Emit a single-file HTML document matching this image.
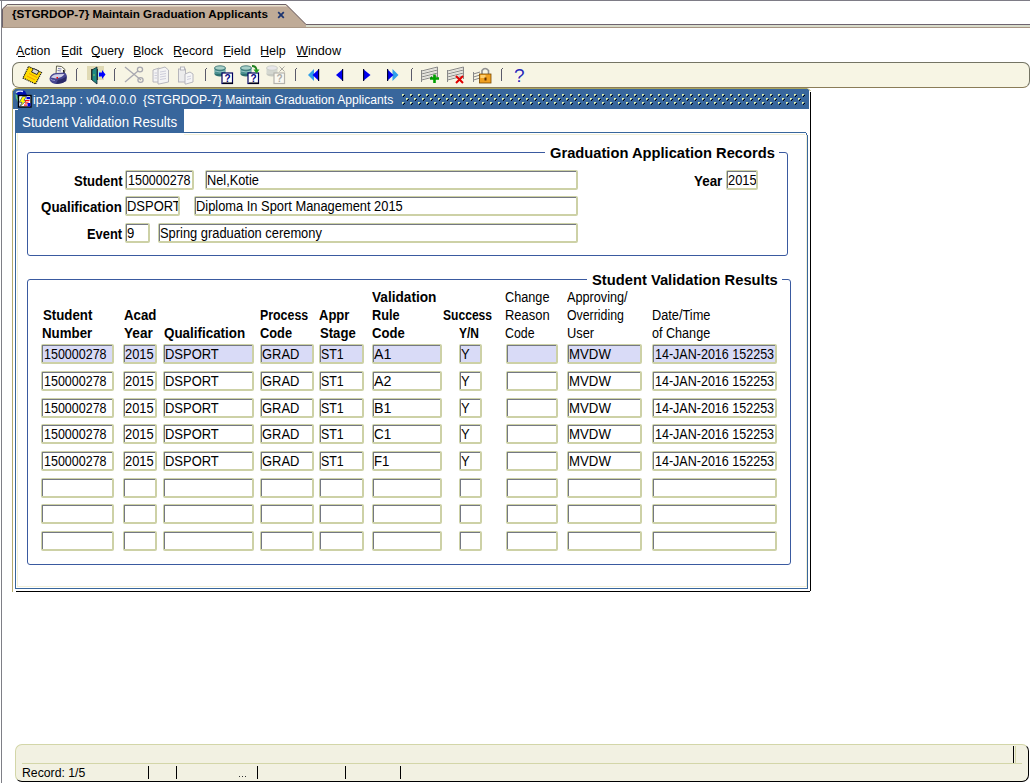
<!DOCTYPE html><html><head><meta charset="utf-8"><style>
html,body{margin:0;padding:0;background:#fff;width:1030px;height:783px;overflow:hidden;position:relative;}
div,span,svg{position:absolute;box-sizing:content-box;}
.t{font-family:"Liberation Sans",sans-serif;white-space:nowrap;transform-origin:0 0;}
.fo{background:#cdd1a6;border-radius:2px;}
.fi{left:1px;top:1px;height:16px;border-top:1px solid #747882;border-left:1px solid #747882;overflow:hidden;}
</style></head><body>
<div style="left:0px;top:0px;width:1030px;height:1px;background:#7e7c86"></div>
<div style="left:1px;top:0px;width:1px;height:783px;background:#7e7f86"></div>
<div style="left:2px;top:24px;width:1028px;height:1px;background:#6e6470"></div>
<div style="left:2px;top:25px;width:1028px;height:2px;background:#d9dccb"></div>
<div style="left:2px;top:27px;width:1028px;height:1px;background:#a99785"></div>
<svg style="position:absolute;left:0;top:0" width="320" height="30">
<path d="M2 27 L2 9 L7 4 L286 4 L306 24 L306 27 Z" fill="#bfab97"/>
<path d="M2.5 27 L2.5 9 L7.5 4.5 L286 4.5 L306 24.5 L320 24.5" fill="none" stroke="#6d6168" stroke-width="1"/>
<path d="M7 5.5 L286 5.5" stroke="#e6e4cc" stroke-width="1"/>
<path d="M6 6.5 L287 6.5" stroke="#d8c4b8" stroke-width="1"/>
</svg>
<span class="t" style="left:12.00px;top:9px;font-size:11.5px;line-height:11.5px;color:#000;font-weight:bold;transform:scaleX(1.0158);">{STGRDOP-7} Maintain Graduation Applicants</span>
<svg style="position:absolute;left:276px;top:10px" width="10" height="9"><path d="M2.2 2.2 L7.8 7.8 M7.8 2.2 L2.2 7.8" stroke="#1a3470" stroke-width="1.7"/></svg>
<span class="t" style="left:16.30px;top:45px;font-size:12px;line-height:12px;color:#000;transform:scaleX(1.0303);">Action</span>
<div style="left:18px;top:56px;width:7px;height:1px;background:#000"></div>
<span class="t" style="left:60.50px;top:45px;font-size:12px;line-height:12px;color:#000;transform:scaleX(1.0286);">Edit</span>
<div style="left:62px;top:56px;width:7px;height:1px;background:#000"></div>
<span class="t" style="left:90.70px;top:45px;font-size:12px;line-height:12px;color:#000;transform:scaleX(1.0091);">Query</span>
<div style="left:92px;top:56px;width:8px;height:1px;background:#000"></div>
<span class="t" style="left:132.70px;top:45px;font-size:12px;line-height:12px;color:#000;transform:scaleX(1.0267);">Block</span>
<div style="left:134px;top:56px;width:7px;height:1px;background:#000"></div>
<span class="t" style="left:172.70px;top:45px;font-size:12px;line-height:12px;color:#000;transform:scaleX(1.0359);">Record</span>
<div style="left:174px;top:56px;width:8px;height:1px;background:#000"></div>
<span class="t" style="left:222.50px;top:45px;font-size:12px;line-height:12px;color:#000;transform:scaleX(1.0692);">Field</span>
<div style="left:224px;top:56px;width:7px;height:1px;background:#000"></div>
<span class="t" style="left:259.80px;top:45px;font-size:12px;line-height:12px;color:#000;transform:scaleX(1.0480);">Help</span>
<div style="left:261px;top:56px;width:8px;height:1px;background:#000"></div>
<span class="t" style="left:295.70px;top:45px;font-size:12px;line-height:12px;color:#000;transform:scaleX(1.0558);">Window</span>
<div style="left:297px;top:56px;width:11px;height:1px;background:#000"></div>
<div style="left:12px;top:62px;width:1016px;height:24px;background:#f7f5e4;border:1px solid #747464;border-bottom-color:#8a7c58;border-radius:7px;"></div>
<svg style="position:absolute;left:0;top:0" width="540" height="90">
<!-- floppy -->
<g>
<polygon points="28.5,66.5 41.5,72.5 35.5,84 23,78" fill="#ffdc00" stroke="#1a1a1a" stroke-width="1.2" stroke-dasharray="1.2 0.8"/>
<path d="M27 76 L35 80 M29 73.5 L37 77.5 M31 71 L38.5 74.5" stroke="#f08000" stroke-width="0.9" opacity="0.8"/>
<polygon points="33.5,68.5 39,71 37,74.5 31.5,72" fill="#d8d8d8" stroke="#222" stroke-width="0.9"/>
</g>
<!-- printer -->
<g>
<polygon points="56.5,66 61.5,66.5 65,69.5 64,75 56,74" fill="#fafaf0" stroke="#505040" stroke-width="0.9"/>
<path d="M58 68.5 L61.5 69 M57.5 70.5 L61 71" stroke="#7070b0" stroke-width="0.9"/>
<path d="M63.5 70 L64 74.5" stroke="#202020" stroke-width="1.2"/>
<path d="M49.5 78.5 Q50.5 73.5 56 73 L64.5 72.5 Q67.5 74.5 66.8 78 L66.3 81 Q61 84.8 54.5 83.8 Q49.5 82.3 49.5 78.5 Z" fill="#464690"/>
<path d="M58 80 Q63 79 66.5 76.5 L66 81 Q61 84.8 56 83.5 Z" fill="#2a2a68"/>
<path d="M51 77.5 Q52.5 74.5 57 74.2 L64.5 74 Q62.5 77.5 56 78.5 Z" fill="#d0d0e8"/>
<path d="M50.5 79 Q52 80.5 55 80.5" stroke="#9090c8" stroke-width="1" fill="none"/>
<rect x="56.5" y="77" width="1.5" height="1.5" fill="#ff0000"/>
</g>
<!-- separators -->
<g fill="#5a5a6a">
<rect x="76" y="69" width="1" height="12"/><rect x="77" y="68" width="1" height="1"/>
<rect x="114" y="69" width="1" height="12"/><rect x="115" y="68" width="1" height="1"/>
<rect x="205" y="69" width="1" height="12"/><rect x="206" y="68" width="1" height="1"/>
<rect x="295" y="69" width="1" height="12"/><rect x="296" y="68" width="1" height="1"/>
<rect x="411" y="69" width="1" height="12"/><rect x="412" y="68" width="1" height="1"/>
<rect x="501" y="69" width="1" height="12"/><rect x="502" y="68" width="1" height="1"/>
</g>
<!-- exit door -->
<g>
<rect x="87" y="66" width="17" height="14" fill="#e0dab4"/>
<rect x="91" y="69" width="2" height="11" fill="#40382a"/>
<polygon points="92,70 97,67 97,84 92,80" fill="#1f8a82" stroke="#123" stroke-width="0.8"/>
<rect x="97" y="69" width="1" height="11" fill="#2a2a3a"/>
<rect x="98" y="71" width="2" height="6" fill="#a8f0f0"/>
<polygon points="99,72.5 102,72.5 102,70 105.5,74.5 102,79 102,76.5 99,76.5" fill="#0000ff"/>
<rect x="93.5" y="74.5" width="1" height="1" fill="#ffff40"/>
</g>
<!-- scissors (disabled) -->
<g fill="none" stroke="#a8a8b0" stroke-width="1.3">
<path d="M125 67 L141 80"/><path d="M125 82 L138 71"/>
<ellipse cx="140" cy="69.5" rx="2.6" ry="2.4"/><ellipse cx="140.5" cy="80" rx="2.6" ry="2.4"/>
</g>
<!-- copy (disabled) -->
<g stroke="#b0b0b8" stroke-width="0.9" fill="#f4f4f4">
<polygon points="153,70 159,68 162,70 162,82 153,82"/>
<polygon points="158,69 165,67 168.5,70 168.5,82 159,84 158,84"/>
<path d="M160 72 L166 71 M160 74.5 L166 73.5 M160 77 L166 76 M160 79.5 L166 78.5 M154.5 73 L157 73 M154.5 75.5 L157 75.5 M154.5 78 L157 78" stroke="#c8c8d8"/>
</g>
<!-- paste (disabled) -->
<g stroke="#b0b0b8" stroke-width="0.9" fill="#ececec">
<rect x="178.5" y="69" width="7" height="13" />
<rect x="180.5" y="67" width="4" height="3" fill="#f8f8f8"/>
<polygon points="185,74 190,72 193,74 193,82 186,84 185,84" fill="#f6f6f6"/>
<path d="M187 77 L191 76 M187 79.5 L191 78.5" stroke="#c8c8d8"/>
</g>
<!-- query db icons -->
<g>
<ellipse cx="220" cy="74" rx="5.5" ry="2.5" fill="#2e7070"/>
<rect x="214.5" y="68" width="11" height="6" fill="#4a9090"/>
<ellipse cx="220" cy="68" rx="5.5" ry="2.2" fill="#a8d0c8" stroke="#2e6a6a" stroke-width="0.8"/>
<path d="M215 71 Q220 73 225 71" stroke="#a8d0d0" fill="none" stroke-width="0.8"/>
<rect x="222" y="73" width="10.5" height="10.5" fill="#fff" stroke="#000060" stroke-width="1.2"/>
<rect x="223" y="82.5" width="10" height="1.2" fill="#000"/>
<text x="224.5" y="82" font-family="Liberation Sans" font-weight="bold" font-size="10" fill="#000080">?</text>
</g>
<g>
<ellipse cx="246" cy="74" rx="5.5" ry="2.5" fill="#2e7070"/>
<rect x="240.5" y="68" width="11" height="6" fill="#4a9090"/>
<ellipse cx="246" cy="68" rx="5.5" ry="2.2" fill="#a8d0c8" stroke="#2e6a6a" stroke-width="0.8"/>
<path d="M241 71 Q246 73 251 71" stroke="#a8d0d0" fill="none" stroke-width="0.8"/>
<rect x="248" y="73" width="10.5" height="10.5" fill="#fff" stroke="#000060" stroke-width="1.2"/>
<rect x="249" y="82.5" width="10" height="1.2" fill="#000"/>
<text x="250.5" y="82" font-family="Liberation Sans" font-weight="bold" font-size="10" fill="#000080">?</text>
<path d="M252 66 Q256 66 256.5 70" stroke="#208020" stroke-width="1.8" fill="none"/>
<polygon points="253.5,69.5 259.5,69.5 256.5,73.5" fill="#20a020"/>
</g>
<g opacity="0.55">
<ellipse cx="272" cy="74" rx="5.5" ry="2.5" fill="#a0a8a8"/>
<rect x="266.5" y="68" width="11" height="6" fill="#b8c0c0"/>
<ellipse cx="272" cy="68" rx="5.5" ry="2.2" fill="#dde" stroke="#a0a8a8" stroke-width="0.8"/>
<rect x="274" y="73" width="10.5" height="10.5" fill="#fff" stroke="#808080" stroke-width="1.2"/>
<text x="276.5" y="82" font-family="Liberation Sans" font-weight="bold" font-size="10" fill="#707070">?</text>
<path d="M279.5 66.5 L284.5 71.5 M284.5 66.5 L279.5 71.5" stroke="#707070" stroke-width="1"/>
</g>
<!-- nav arrows -->
<g>
<polygon points="314,69 308,75 314,81" fill="#30a0e8"/>
<polygon points="319,69 312.5,75 319,81" fill="#0000f0"/>
<rect x="318" y="69" width="1.2" height="12" fill="#000030"/>
<polygon points="343,69 336,75 343,81" fill="#0000f0"/>
<rect x="342" y="69" width="1.2" height="12" fill="#000030"/>
<polygon points="363,69 370.5,75 363,81" fill="#0000f0"/>
<rect x="363" y="69" width="1.2" height="12" fill="#000030"/>
<polygon points="392.5,69 398.5,75 392.5,81" fill="#30a0e8"/>
<polygon points="387,69 393.5,75 387,81" fill="#0000f0"/>
<rect x="387" y="69" width="1.2" height="12" fill="#000030"/>
</g>
<!-- record insert/delete/lock -->
<g stroke="#888" stroke-width="1" fill="none">
<path d="M421.5 71 L437.5 67 M421.5 74 L437.5 70 M421.5 77 L437.5 73 M421.5 80 L437.5 76"/>
<path d="M421.5 70 L421.5 82 M437.5 67 L437.5 79"/>
<path d="M447.5 71 L463.5 67 M447.5 74 L463.5 70 M447.5 77 L463.5 73 M447.5 80 L463.5 76"/>
<path d="M447.5 70 L447.5 82 M463.5 67 L463.5 79"/>
<path d="M473.5 74 L480 72 M473.5 77 L480 75 M473.5 80 L480 78 M473.5 72 L473.5 82"/>
</g>
<g stroke="#d8d8d8" stroke-width="1" fill="none">
<path d="M422 72.5 L437 68.5 M422 75.5 L437 71.5 M422 78.5 L437 74.5"/>
<path d="M448 72.5 L463 68.5 M448 75.5 L463 71.5 M448 78.5 L463 74.5"/>
</g>
<path d="M430 78.5 L439 78.5 M434.5 74.5 L434.5 83" stroke="#00a000" stroke-width="2.6"/>
<path d="M431 77 L432 77" stroke="#005000" stroke-width="1"/>
<path d="M456 76 L463 83 M463 76 L456 83" stroke="#e00000" stroke-width="2"/>
<g>
<path d="M482 75 L482 70.5 Q485 66.5 488.5 70.5 L488.5 75" stroke="#909090" stroke-width="1.6" fill="none"/>
<rect x="479.5" y="74" width="11.5" height="9" fill="#f0a020" stroke="#7a4a00" stroke-width="0.8"/>
<rect x="480.5" y="75" width="5" height="3" fill="#ffd070"/>
<rect x="484.5" y="77.5" width="2" height="3" fill="#603000"/>
</g>
<!-- help -->
<text x="513" y="82" font-family="Liberation Sans" font-size="19" fill="#ffffff">?</text>
<text x="514" y="81.5" font-family="Liberation Sans" font-size="19" fill="#2a2ab8">?</text>
</svg>

<div style="left:12px;top:88px;width:796px;height:1px;background:#a8a460"></div>
<div style="left:12px;top:88px;width:1px;height:504px;background:#b3aa70"></div>
<div style="left:13px;top:89px;width:796px;height:20px;background:#38669c"></div>
<svg style="position:absolute;left:402px;top:94px" width="410" height="12"><path d="M0 0h2v1h-1v1h-1z" fill="#e4f0a8"/><path d="M2 1h1v1h-1zM1 2h1v1h-1z" fill="#000"/><path d="M8 0h2v1h-1v1h-1z" fill="#e4f0a8"/><path d="M10 1h1v1h-1zM9 2h1v1h-1z" fill="#000"/><path d="M16 0h2v1h-1v1h-1z" fill="#e4f0a8"/><path d="M18 1h1v1h-1zM17 2h1v1h-1z" fill="#000"/><path d="M24 0h2v1h-1v1h-1z" fill="#e4f0a8"/><path d="M26 1h1v1h-1zM25 2h1v1h-1z" fill="#000"/><path d="M32 0h2v1h-1v1h-1z" fill="#e4f0a8"/><path d="M34 1h1v1h-1zM33 2h1v1h-1z" fill="#000"/><path d="M40 0h2v1h-1v1h-1z" fill="#e4f0a8"/><path d="M42 1h1v1h-1zM41 2h1v1h-1z" fill="#000"/><path d="M48 0h2v1h-1v1h-1z" fill="#e4f0a8"/><path d="M50 1h1v1h-1zM49 2h1v1h-1z" fill="#000"/><path d="M56 0h2v1h-1v1h-1z" fill="#e4f0a8"/><path d="M58 1h1v1h-1zM57 2h1v1h-1z" fill="#000"/><path d="M64 0h2v1h-1v1h-1z" fill="#e4f0a8"/><path d="M66 1h1v1h-1zM65 2h1v1h-1z" fill="#000"/><path d="M72 0h2v1h-1v1h-1z" fill="#e4f0a8"/><path d="M74 1h1v1h-1zM73 2h1v1h-1z" fill="#000"/><path d="M80 0h2v1h-1v1h-1z" fill="#e4f0a8"/><path d="M82 1h1v1h-1zM81 2h1v1h-1z" fill="#000"/><path d="M88 0h2v1h-1v1h-1z" fill="#e4f0a8"/><path d="M90 1h1v1h-1zM89 2h1v1h-1z" fill="#000"/><path d="M96 0h2v1h-1v1h-1z" fill="#e4f0a8"/><path d="M98 1h1v1h-1zM97 2h1v1h-1z" fill="#000"/><path d="M104 0h2v1h-1v1h-1z" fill="#e4f0a8"/><path d="M106 1h1v1h-1zM105 2h1v1h-1z" fill="#000"/><path d="M112 0h2v1h-1v1h-1z" fill="#e4f0a8"/><path d="M114 1h1v1h-1zM113 2h1v1h-1z" fill="#000"/><path d="M120 0h2v1h-1v1h-1z" fill="#e4f0a8"/><path d="M122 1h1v1h-1zM121 2h1v1h-1z" fill="#000"/><path d="M128 0h2v1h-1v1h-1z" fill="#e4f0a8"/><path d="M130 1h1v1h-1zM129 2h1v1h-1z" fill="#000"/><path d="M136 0h2v1h-1v1h-1z" fill="#e4f0a8"/><path d="M138 1h1v1h-1zM137 2h1v1h-1z" fill="#000"/><path d="M144 0h2v1h-1v1h-1z" fill="#e4f0a8"/><path d="M146 1h1v1h-1zM145 2h1v1h-1z" fill="#000"/><path d="M152 0h2v1h-1v1h-1z" fill="#e4f0a8"/><path d="M154 1h1v1h-1zM153 2h1v1h-1z" fill="#000"/><path d="M160 0h2v1h-1v1h-1z" fill="#e4f0a8"/><path d="M162 1h1v1h-1zM161 2h1v1h-1z" fill="#000"/><path d="M168 0h2v1h-1v1h-1z" fill="#e4f0a8"/><path d="M170 1h1v1h-1zM169 2h1v1h-1z" fill="#000"/><path d="M176 0h2v1h-1v1h-1z" fill="#e4f0a8"/><path d="M178 1h1v1h-1zM177 2h1v1h-1z" fill="#000"/><path d="M184 0h2v1h-1v1h-1z" fill="#e4f0a8"/><path d="M186 1h1v1h-1zM185 2h1v1h-1z" fill="#000"/><path d="M192 0h2v1h-1v1h-1z" fill="#e4f0a8"/><path d="M194 1h1v1h-1zM193 2h1v1h-1z" fill="#000"/><path d="M200 0h2v1h-1v1h-1z" fill="#e4f0a8"/><path d="M202 1h1v1h-1zM201 2h1v1h-1z" fill="#000"/><path d="M208 0h2v1h-1v1h-1z" fill="#e4f0a8"/><path d="M210 1h1v1h-1zM209 2h1v1h-1z" fill="#000"/><path d="M216 0h2v1h-1v1h-1z" fill="#e4f0a8"/><path d="M218 1h1v1h-1zM217 2h1v1h-1z" fill="#000"/><path d="M224 0h2v1h-1v1h-1z" fill="#e4f0a8"/><path d="M226 1h1v1h-1zM225 2h1v1h-1z" fill="#000"/><path d="M232 0h2v1h-1v1h-1z" fill="#e4f0a8"/><path d="M234 1h1v1h-1zM233 2h1v1h-1z" fill="#000"/><path d="M240 0h2v1h-1v1h-1z" fill="#e4f0a8"/><path d="M242 1h1v1h-1zM241 2h1v1h-1z" fill="#000"/><path d="M248 0h2v1h-1v1h-1z" fill="#e4f0a8"/><path d="M250 1h1v1h-1zM249 2h1v1h-1z" fill="#000"/><path d="M256 0h2v1h-1v1h-1z" fill="#e4f0a8"/><path d="M258 1h1v1h-1zM257 2h1v1h-1z" fill="#000"/><path d="M264 0h2v1h-1v1h-1z" fill="#e4f0a8"/><path d="M266 1h1v1h-1zM265 2h1v1h-1z" fill="#000"/><path d="M272 0h2v1h-1v1h-1z" fill="#e4f0a8"/><path d="M274 1h1v1h-1zM273 2h1v1h-1z" fill="#000"/><path d="M280 0h2v1h-1v1h-1z" fill="#e4f0a8"/><path d="M282 1h1v1h-1zM281 2h1v1h-1z" fill="#000"/><path d="M288 0h2v1h-1v1h-1z" fill="#e4f0a8"/><path d="M290 1h1v1h-1zM289 2h1v1h-1z" fill="#000"/><path d="M296 0h2v1h-1v1h-1z" fill="#e4f0a8"/><path d="M298 1h1v1h-1zM297 2h1v1h-1z" fill="#000"/><path d="M304 0h2v1h-1v1h-1z" fill="#e4f0a8"/><path d="M306 1h1v1h-1zM305 2h1v1h-1z" fill="#000"/><path d="M312 0h2v1h-1v1h-1z" fill="#e4f0a8"/><path d="M314 1h1v1h-1zM313 2h1v1h-1z" fill="#000"/><path d="M320 0h2v1h-1v1h-1z" fill="#e4f0a8"/><path d="M322 1h1v1h-1zM321 2h1v1h-1z" fill="#000"/><path d="M328 0h2v1h-1v1h-1z" fill="#e4f0a8"/><path d="M330 1h1v1h-1zM329 2h1v1h-1z" fill="#000"/><path d="M336 0h2v1h-1v1h-1z" fill="#e4f0a8"/><path d="M338 1h1v1h-1zM337 2h1v1h-1z" fill="#000"/><path d="M344 0h2v1h-1v1h-1z" fill="#e4f0a8"/><path d="M346 1h1v1h-1zM345 2h1v1h-1z" fill="#000"/><path d="M352 0h2v1h-1v1h-1z" fill="#e4f0a8"/><path d="M354 1h1v1h-1zM353 2h1v1h-1z" fill="#000"/><path d="M360 0h2v1h-1v1h-1z" fill="#e4f0a8"/><path d="M362 1h1v1h-1zM361 2h1v1h-1z" fill="#000"/><path d="M368 0h2v1h-1v1h-1z" fill="#e4f0a8"/><path d="M370 1h1v1h-1zM369 2h1v1h-1z" fill="#000"/><path d="M376 0h2v1h-1v1h-1z" fill="#e4f0a8"/><path d="M378 1h1v1h-1zM377 2h1v1h-1z" fill="#000"/><path d="M384 0h2v1h-1v1h-1z" fill="#e4f0a8"/><path d="M386 1h1v1h-1zM385 2h1v1h-1z" fill="#000"/><path d="M392 0h2v1h-1v1h-1z" fill="#e4f0a8"/><path d="M394 1h1v1h-1zM393 2h1v1h-1z" fill="#000"/><path d="M400 0h2v1h-1v1h-1z" fill="#e4f0a8"/><path d="M402 1h1v1h-1zM401 2h1v1h-1z" fill="#000"/><path d="M4 4h2v1h-1v1h-1z" fill="#e4f0a8"/><path d="M6 5h1v1h-1zM5 6h1v1h-1z" fill="#000"/><path d="M12 4h2v1h-1v1h-1z" fill="#e4f0a8"/><path d="M14 5h1v1h-1zM13 6h1v1h-1z" fill="#000"/><path d="M20 4h2v1h-1v1h-1z" fill="#e4f0a8"/><path d="M22 5h1v1h-1zM21 6h1v1h-1z" fill="#000"/><path d="M28 4h2v1h-1v1h-1z" fill="#e4f0a8"/><path d="M30 5h1v1h-1zM29 6h1v1h-1z" fill="#000"/><path d="M36 4h2v1h-1v1h-1z" fill="#e4f0a8"/><path d="M38 5h1v1h-1zM37 6h1v1h-1z" fill="#000"/><path d="M44 4h2v1h-1v1h-1z" fill="#e4f0a8"/><path d="M46 5h1v1h-1zM45 6h1v1h-1z" fill="#000"/><path d="M52 4h2v1h-1v1h-1z" fill="#e4f0a8"/><path d="M54 5h1v1h-1zM53 6h1v1h-1z" fill="#000"/><path d="M60 4h2v1h-1v1h-1z" fill="#e4f0a8"/><path d="M62 5h1v1h-1zM61 6h1v1h-1z" fill="#000"/><path d="M68 4h2v1h-1v1h-1z" fill="#e4f0a8"/><path d="M70 5h1v1h-1zM69 6h1v1h-1z" fill="#000"/><path d="M76 4h2v1h-1v1h-1z" fill="#e4f0a8"/><path d="M78 5h1v1h-1zM77 6h1v1h-1z" fill="#000"/><path d="M84 4h2v1h-1v1h-1z" fill="#e4f0a8"/><path d="M86 5h1v1h-1zM85 6h1v1h-1z" fill="#000"/><path d="M92 4h2v1h-1v1h-1z" fill="#e4f0a8"/><path d="M94 5h1v1h-1zM93 6h1v1h-1z" fill="#000"/><path d="M100 4h2v1h-1v1h-1z" fill="#e4f0a8"/><path d="M102 5h1v1h-1zM101 6h1v1h-1z" fill="#000"/><path d="M108 4h2v1h-1v1h-1z" fill="#e4f0a8"/><path d="M110 5h1v1h-1zM109 6h1v1h-1z" fill="#000"/><path d="M116 4h2v1h-1v1h-1z" fill="#e4f0a8"/><path d="M118 5h1v1h-1zM117 6h1v1h-1z" fill="#000"/><path d="M124 4h2v1h-1v1h-1z" fill="#e4f0a8"/><path d="M126 5h1v1h-1zM125 6h1v1h-1z" fill="#000"/><path d="M132 4h2v1h-1v1h-1z" fill="#e4f0a8"/><path d="M134 5h1v1h-1zM133 6h1v1h-1z" fill="#000"/><path d="M140 4h2v1h-1v1h-1z" fill="#e4f0a8"/><path d="M142 5h1v1h-1zM141 6h1v1h-1z" fill="#000"/><path d="M148 4h2v1h-1v1h-1z" fill="#e4f0a8"/><path d="M150 5h1v1h-1zM149 6h1v1h-1z" fill="#000"/><path d="M156 4h2v1h-1v1h-1z" fill="#e4f0a8"/><path d="M158 5h1v1h-1zM157 6h1v1h-1z" fill="#000"/><path d="M164 4h2v1h-1v1h-1z" fill="#e4f0a8"/><path d="M166 5h1v1h-1zM165 6h1v1h-1z" fill="#000"/><path d="M172 4h2v1h-1v1h-1z" fill="#e4f0a8"/><path d="M174 5h1v1h-1zM173 6h1v1h-1z" fill="#000"/><path d="M180 4h2v1h-1v1h-1z" fill="#e4f0a8"/><path d="M182 5h1v1h-1zM181 6h1v1h-1z" fill="#000"/><path d="M188 4h2v1h-1v1h-1z" fill="#e4f0a8"/><path d="M190 5h1v1h-1zM189 6h1v1h-1z" fill="#000"/><path d="M196 4h2v1h-1v1h-1z" fill="#e4f0a8"/><path d="M198 5h1v1h-1zM197 6h1v1h-1z" fill="#000"/><path d="M204 4h2v1h-1v1h-1z" fill="#e4f0a8"/><path d="M206 5h1v1h-1zM205 6h1v1h-1z" fill="#000"/><path d="M212 4h2v1h-1v1h-1z" fill="#e4f0a8"/><path d="M214 5h1v1h-1zM213 6h1v1h-1z" fill="#000"/><path d="M220 4h2v1h-1v1h-1z" fill="#e4f0a8"/><path d="M222 5h1v1h-1zM221 6h1v1h-1z" fill="#000"/><path d="M228 4h2v1h-1v1h-1z" fill="#e4f0a8"/><path d="M230 5h1v1h-1zM229 6h1v1h-1z" fill="#000"/><path d="M236 4h2v1h-1v1h-1z" fill="#e4f0a8"/><path d="M238 5h1v1h-1zM237 6h1v1h-1z" fill="#000"/><path d="M244 4h2v1h-1v1h-1z" fill="#e4f0a8"/><path d="M246 5h1v1h-1zM245 6h1v1h-1z" fill="#000"/><path d="M252 4h2v1h-1v1h-1z" fill="#e4f0a8"/><path d="M254 5h1v1h-1zM253 6h1v1h-1z" fill="#000"/><path d="M260 4h2v1h-1v1h-1z" fill="#e4f0a8"/><path d="M262 5h1v1h-1zM261 6h1v1h-1z" fill="#000"/><path d="M268 4h2v1h-1v1h-1z" fill="#e4f0a8"/><path d="M270 5h1v1h-1zM269 6h1v1h-1z" fill="#000"/><path d="M276 4h2v1h-1v1h-1z" fill="#e4f0a8"/><path d="M278 5h1v1h-1zM277 6h1v1h-1z" fill="#000"/><path d="M284 4h2v1h-1v1h-1z" fill="#e4f0a8"/><path d="M286 5h1v1h-1zM285 6h1v1h-1z" fill="#000"/><path d="M292 4h2v1h-1v1h-1z" fill="#e4f0a8"/><path d="M294 5h1v1h-1zM293 6h1v1h-1z" fill="#000"/><path d="M300 4h2v1h-1v1h-1z" fill="#e4f0a8"/><path d="M302 5h1v1h-1zM301 6h1v1h-1z" fill="#000"/><path d="M308 4h2v1h-1v1h-1z" fill="#e4f0a8"/><path d="M310 5h1v1h-1zM309 6h1v1h-1z" fill="#000"/><path d="M316 4h2v1h-1v1h-1z" fill="#e4f0a8"/><path d="M318 5h1v1h-1zM317 6h1v1h-1z" fill="#000"/><path d="M324 4h2v1h-1v1h-1z" fill="#e4f0a8"/><path d="M326 5h1v1h-1zM325 6h1v1h-1z" fill="#000"/><path d="M332 4h2v1h-1v1h-1z" fill="#e4f0a8"/><path d="M334 5h1v1h-1zM333 6h1v1h-1z" fill="#000"/><path d="M340 4h2v1h-1v1h-1z" fill="#e4f0a8"/><path d="M342 5h1v1h-1zM341 6h1v1h-1z" fill="#000"/><path d="M348 4h2v1h-1v1h-1z" fill="#e4f0a8"/><path d="M350 5h1v1h-1zM349 6h1v1h-1z" fill="#000"/><path d="M356 4h2v1h-1v1h-1z" fill="#e4f0a8"/><path d="M358 5h1v1h-1zM357 6h1v1h-1z" fill="#000"/><path d="M364 4h2v1h-1v1h-1z" fill="#e4f0a8"/><path d="M366 5h1v1h-1zM365 6h1v1h-1z" fill="#000"/><path d="M372 4h2v1h-1v1h-1z" fill="#e4f0a8"/><path d="M374 5h1v1h-1zM373 6h1v1h-1z" fill="#000"/><path d="M380 4h2v1h-1v1h-1z" fill="#e4f0a8"/><path d="M382 5h1v1h-1zM381 6h1v1h-1z" fill="#000"/><path d="M388 4h2v1h-1v1h-1z" fill="#e4f0a8"/><path d="M390 5h1v1h-1zM389 6h1v1h-1z" fill="#000"/><path d="M396 4h2v1h-1v1h-1z" fill="#e4f0a8"/><path d="M398 5h1v1h-1zM397 6h1v1h-1z" fill="#000"/><path d="M0 8h2v1h-1v1h-1z" fill="#e4f0a8"/><path d="M2 9h1v1h-1zM1 10h1v1h-1z" fill="#000"/><path d="M8 8h2v1h-1v1h-1z" fill="#e4f0a8"/><path d="M10 9h1v1h-1zM9 10h1v1h-1z" fill="#000"/><path d="M16 8h2v1h-1v1h-1z" fill="#e4f0a8"/><path d="M18 9h1v1h-1zM17 10h1v1h-1z" fill="#000"/><path d="M24 8h2v1h-1v1h-1z" fill="#e4f0a8"/><path d="M26 9h1v1h-1zM25 10h1v1h-1z" fill="#000"/><path d="M32 8h2v1h-1v1h-1z" fill="#e4f0a8"/><path d="M34 9h1v1h-1zM33 10h1v1h-1z" fill="#000"/><path d="M40 8h2v1h-1v1h-1z" fill="#e4f0a8"/><path d="M42 9h1v1h-1zM41 10h1v1h-1z" fill="#000"/><path d="M48 8h2v1h-1v1h-1z" fill="#e4f0a8"/><path d="M50 9h1v1h-1zM49 10h1v1h-1z" fill="#000"/><path d="M56 8h2v1h-1v1h-1z" fill="#e4f0a8"/><path d="M58 9h1v1h-1zM57 10h1v1h-1z" fill="#000"/><path d="M64 8h2v1h-1v1h-1z" fill="#e4f0a8"/><path d="M66 9h1v1h-1zM65 10h1v1h-1z" fill="#000"/><path d="M72 8h2v1h-1v1h-1z" fill="#e4f0a8"/><path d="M74 9h1v1h-1zM73 10h1v1h-1z" fill="#000"/><path d="M80 8h2v1h-1v1h-1z" fill="#e4f0a8"/><path d="M82 9h1v1h-1zM81 10h1v1h-1z" fill="#000"/><path d="M88 8h2v1h-1v1h-1z" fill="#e4f0a8"/><path d="M90 9h1v1h-1zM89 10h1v1h-1z" fill="#000"/><path d="M96 8h2v1h-1v1h-1z" fill="#e4f0a8"/><path d="M98 9h1v1h-1zM97 10h1v1h-1z" fill="#000"/><path d="M104 8h2v1h-1v1h-1z" fill="#e4f0a8"/><path d="M106 9h1v1h-1zM105 10h1v1h-1z" fill="#000"/><path d="M112 8h2v1h-1v1h-1z" fill="#e4f0a8"/><path d="M114 9h1v1h-1zM113 10h1v1h-1z" fill="#000"/><path d="M120 8h2v1h-1v1h-1z" fill="#e4f0a8"/><path d="M122 9h1v1h-1zM121 10h1v1h-1z" fill="#000"/><path d="M128 8h2v1h-1v1h-1z" fill="#e4f0a8"/><path d="M130 9h1v1h-1zM129 10h1v1h-1z" fill="#000"/><path d="M136 8h2v1h-1v1h-1z" fill="#e4f0a8"/><path d="M138 9h1v1h-1zM137 10h1v1h-1z" fill="#000"/><path d="M144 8h2v1h-1v1h-1z" fill="#e4f0a8"/><path d="M146 9h1v1h-1zM145 10h1v1h-1z" fill="#000"/><path d="M152 8h2v1h-1v1h-1z" fill="#e4f0a8"/><path d="M154 9h1v1h-1zM153 10h1v1h-1z" fill="#000"/><path d="M160 8h2v1h-1v1h-1z" fill="#e4f0a8"/><path d="M162 9h1v1h-1zM161 10h1v1h-1z" fill="#000"/><path d="M168 8h2v1h-1v1h-1z" fill="#e4f0a8"/><path d="M170 9h1v1h-1zM169 10h1v1h-1z" fill="#000"/><path d="M176 8h2v1h-1v1h-1z" fill="#e4f0a8"/><path d="M178 9h1v1h-1zM177 10h1v1h-1z" fill="#000"/><path d="M184 8h2v1h-1v1h-1z" fill="#e4f0a8"/><path d="M186 9h1v1h-1zM185 10h1v1h-1z" fill="#000"/><path d="M192 8h2v1h-1v1h-1z" fill="#e4f0a8"/><path d="M194 9h1v1h-1zM193 10h1v1h-1z" fill="#000"/><path d="M200 8h2v1h-1v1h-1z" fill="#e4f0a8"/><path d="M202 9h1v1h-1zM201 10h1v1h-1z" fill="#000"/><path d="M208 8h2v1h-1v1h-1z" fill="#e4f0a8"/><path d="M210 9h1v1h-1zM209 10h1v1h-1z" fill="#000"/><path d="M216 8h2v1h-1v1h-1z" fill="#e4f0a8"/><path d="M218 9h1v1h-1zM217 10h1v1h-1z" fill="#000"/><path d="M224 8h2v1h-1v1h-1z" fill="#e4f0a8"/><path d="M226 9h1v1h-1zM225 10h1v1h-1z" fill="#000"/><path d="M232 8h2v1h-1v1h-1z" fill="#e4f0a8"/><path d="M234 9h1v1h-1zM233 10h1v1h-1z" fill="#000"/><path d="M240 8h2v1h-1v1h-1z" fill="#e4f0a8"/><path d="M242 9h1v1h-1zM241 10h1v1h-1z" fill="#000"/><path d="M248 8h2v1h-1v1h-1z" fill="#e4f0a8"/><path d="M250 9h1v1h-1zM249 10h1v1h-1z" fill="#000"/><path d="M256 8h2v1h-1v1h-1z" fill="#e4f0a8"/><path d="M258 9h1v1h-1zM257 10h1v1h-1z" fill="#000"/><path d="M264 8h2v1h-1v1h-1z" fill="#e4f0a8"/><path d="M266 9h1v1h-1zM265 10h1v1h-1z" fill="#000"/><path d="M272 8h2v1h-1v1h-1z" fill="#e4f0a8"/><path d="M274 9h1v1h-1zM273 10h1v1h-1z" fill="#000"/><path d="M280 8h2v1h-1v1h-1z" fill="#e4f0a8"/><path d="M282 9h1v1h-1zM281 10h1v1h-1z" fill="#000"/><path d="M288 8h2v1h-1v1h-1z" fill="#e4f0a8"/><path d="M290 9h1v1h-1zM289 10h1v1h-1z" fill="#000"/><path d="M296 8h2v1h-1v1h-1z" fill="#e4f0a8"/><path d="M298 9h1v1h-1zM297 10h1v1h-1z" fill="#000"/><path d="M304 8h2v1h-1v1h-1z" fill="#e4f0a8"/><path d="M306 9h1v1h-1zM305 10h1v1h-1z" fill="#000"/><path d="M312 8h2v1h-1v1h-1z" fill="#e4f0a8"/><path d="M314 9h1v1h-1zM313 10h1v1h-1z" fill="#000"/><path d="M320 8h2v1h-1v1h-1z" fill="#e4f0a8"/><path d="M322 9h1v1h-1zM321 10h1v1h-1z" fill="#000"/><path d="M328 8h2v1h-1v1h-1z" fill="#e4f0a8"/><path d="M330 9h1v1h-1zM329 10h1v1h-1z" fill="#000"/><path d="M336 8h2v1h-1v1h-1z" fill="#e4f0a8"/><path d="M338 9h1v1h-1zM337 10h1v1h-1z" fill="#000"/><path d="M344 8h2v1h-1v1h-1z" fill="#e4f0a8"/><path d="M346 9h1v1h-1zM345 10h1v1h-1z" fill="#000"/><path d="M352 8h2v1h-1v1h-1z" fill="#e4f0a8"/><path d="M354 9h1v1h-1zM353 10h1v1h-1z" fill="#000"/><path d="M360 8h2v1h-1v1h-1z" fill="#e4f0a8"/><path d="M362 9h1v1h-1zM361 10h1v1h-1z" fill="#000"/><path d="M368 8h2v1h-1v1h-1z" fill="#e4f0a8"/><path d="M370 9h1v1h-1zM369 10h1v1h-1z" fill="#000"/><path d="M376 8h2v1h-1v1h-1z" fill="#e4f0a8"/><path d="M378 9h1v1h-1zM377 10h1v1h-1z" fill="#000"/><path d="M384 8h2v1h-1v1h-1z" fill="#e4f0a8"/><path d="M386 9h1v1h-1zM385 10h1v1h-1z" fill="#000"/><path d="M392 8h2v1h-1v1h-1z" fill="#e4f0a8"/><path d="M394 9h1v1h-1zM393 10h1v1h-1z" fill="#000"/><path d="M400 8h2v1h-1v1h-1z" fill="#e4f0a8"/><path d="M402 9h1v1h-1zM401 10h1v1h-1z" fill="#000"/></svg>
<svg style="position:absolute;left:11px;top:87px" width="6" height="6"><polygon points="0,0 4,0 4,1 1,4 0,4" fill="#fff"/><path d="M1.5 4.5 L4.5 1.5" stroke="#a8a460" stroke-width="1"/></svg>
<svg style="position:absolute;left:804px;top:87px" width="8" height="8"><polygon points="3,1 8,1 8,6" fill="#fff"/><path d="M4 1.5 L6.5 4" stroke="#a8a460" stroke-width="1"/></svg>
<svg style="position:absolute;left:12px;top:88px" width="24" height="20">
<path d="M5 4 Q9 1 13 3 L15 7 L8 8 L7 14 Q3 11 4 7 Z" fill="#0010b0"/>
<path d="M4 4.5 Q7 2.5 11 3.5" stroke="#e0e4ff" stroke-width="1.3" fill="none"/>
<path d="M4.5 6.5 Q4 10 6.5 13" stroke="#60c880" stroke-width="2" fill="none"/>
<rect x="6.5" y="7.5" width="12.5" height="11.5" fill="#fff" stroke="#000" stroke-width="1.4"/>
<polygon points="10.5,8.5 14.5,8.5 12,12.3 14.8,12.3 7.5,19 10,14.3 7.3,14.3" fill="#ffff00" stroke="#001080" stroke-width="0.6"/>
<rect x="14.5" y="9" width="3.5" height="2.2" fill="#0000d8"/>
<rect x="13" y="12" width="4.5" height="1.3" fill="#ff1010"/>
<rect x="13" y="14.3" width="3.5" height="1.3" fill="#ff1010"/>
<rect x="12" y="16.5" width="3" height="1.2" fill="#ff1010"/>
<rect x="15.5" y="15" width="3" height="3.5" fill="#0000d8"/>
</svg>

<span class="t" style="left:32.70px;top:94px;font-size:12px;line-height:12px;color:#fff;transform:scaleX(1.0112);white-space:pre;">ip21app : v04.0.0.0  {STGRDOP-7} Maintain Graduation Applicants</span>
<div style="left:13px;top:109px;width:2px;height:480px;background:#fff"></div>
<div style="left:15px;top:109px;width:169px;height:24px;background:#38669c"></div>
<div style="left:15px;top:109px;width:3px;height:1px;background:#fff"></div>
<span class="t" style="left:21.70px;top:115px;font-size:14px;line-height:14px;color:#fff;transform:scaleX(0.9509);">Student Validation Results</span>
<div style="left:184px;top:132px;width:622px;height:1px;background:#38669c"></div>
<div style="left:15px;top:133px;width:1px;height:456px;background:#38669c"></div>
<div style="left:15px;top:588px;width:793px;height:1px;background:#38669c"></div>
<div style="left:807px;top:135px;width:1px;height:453px;background:#38669c"></div>
<div style="left:806px;top:133px;width:1px;height:2px;background:#38669c"></div>
<div style="left:16px;top:591px;width:794px;height:1px;background:#000"></div>
<div style="left:810px;top:92px;width:1px;height:499px;background:#000"></div>
<div style="left:17px;top:133px;width:1px;height:454px;background:#f2f0d8"></div>
<div style="left:17px;top:586px;width:789px;height:1px;background:#f2f0d8"></div>
<div style="left:806px;top:135px;width:1px;height:452px;background:#f2f0d8"></div>
<div style="left:184px;top:134px;width:621px;height:1px;background:#f2f0d8"></div>
<div style="left:27px;top:152px;width:759px;height:102px;border:1px solid #3a5aa0;border-radius:3px;"></div>
<div style="left:545px;top:148px;width:234px;height:8px;background:#fff"></div>
<span class="t" style="left:550.30px;top:145px;font-size:15px;line-height:15px;color:#000;font-weight:bold;transform:scaleX(0.9799);">Graduation Application Records</span>
<span class="t" style="left:74.10px;top:174px;font-size:14px;line-height:14px;color:#000;font-weight:bold;transform:scaleX(0.9327);">Student</span>
<span class="t" style="left:41.10px;top:200px;font-size:14px;line-height:14px;color:#000;font-weight:bold;transform:scaleX(0.9529);">Qualification</span>
<span class="t" style="left:87.30px;top:227px;font-size:14px;line-height:14px;color:#000;font-weight:bold;transform:scaleX(0.9211);">Event</span>
<span class="t" style="left:694.00px;top:174px;font-size:14px;line-height:14px;color:#000;font-weight:bold;transform:scaleX(0.9567);">Year</span>
<div class="fo" style="left:125px;top:170px;width:69px;height:20px;"><div class="fi" style="width:65px;background:#fff"><span class="t" style="left:1.20px;top:1px;font-size:14px;line-height:14px;transform:scaleX(0.8929);">150000278</span></div></div>
<div class="fo" style="left:205px;top:170px;width:373px;height:20px;"><div class="fi" style="width:369px;background:#fff"><span class="t" style="left:0.20px;top:1px;font-size:14px;line-height:14px;transform:scaleX(0.9123);">Nel,Kotie</span></div></div>
<div class="fo" style="left:125px;top:196px;width:55px;height:20px;"><div class="fi" style="width:51px;background:#fff"><span class="t" style="left:0.20px;top:1px;font-size:14px;line-height:14px;transform:scaleX(0.9254);">DSPORT</span></div></div>
<div class="fo" style="left:194px;top:196px;width:384px;height:20px;"><div class="fi" style="width:380px;background:#fff"><span class="t" style="left:0.20px;top:1px;font-size:14px;line-height:14px;transform:scaleX(0.9191);">Diploma In Sport Management 2015</span></div></div>
<div class="fo" style="left:125px;top:223px;width:25px;height:20px;"><div class="fi" style="width:21px;background:#fff"><span class="t" style="left:0.20px;top:1px;font-size:14px;line-height:14px;transform:scaleX(0.9375);">9</span></div></div>
<div class="fo" style="left:158px;top:223px;width:420px;height:20px;"><div class="fi" style="width:416px;background:#fff"><span class="t" style="left:0.20px;top:1px;font-size:14px;line-height:14px;transform:scaleX(0.9205);">Spring graduation ceremony</span></div></div>
<div class="fo" style="left:726px;top:170px;width:32px;height:20px;"><div class="fi" style="width:28px;background:#fff"><span class="t" style="left:0.20px;top:1px;font-size:14px;line-height:14px;transform:scaleX(0.9194);">2015</span></div></div>
<div style="left:27px;top:279px;width:762px;height:284px;border:1px solid #3a5aa0;border-radius:3px;"></div>
<div style="left:587px;top:274px;width:195px;height:8px;background:#fff"></div>
<span class="t" style="left:592.10px;top:272px;font-size:15px;line-height:15px;color:#000;font-weight:bold;transform:scaleX(0.9820);">Student Validation Results</span>
<span class="t" style="left:42.80px;top:308px;font-size:14px;line-height:14px;color:#000;font-weight:bold;transform:scaleX(0.9462);">Student</span>
<span class="t" style="left:42.10px;top:326px;font-size:14px;line-height:14px;color:#000;font-weight:bold;transform:scaleX(0.9491);">Number</span>
<span class="t" style="left:123.60px;top:308px;font-size:14px;line-height:14px;color:#000;font-weight:bold;transform:scaleX(0.9471);">Acad</span>
<span class="t" style="left:124.00px;top:326px;font-size:14px;line-height:14px;color:#000;font-weight:bold;transform:scaleX(0.9733);">Year</span>
<span class="t" style="left:163.50px;top:326px;font-size:14px;line-height:14px;color:#000;font-weight:bold;transform:scaleX(0.9576);">Qualification</span>
<span class="t" style="left:260.20px;top:308px;font-size:14px;line-height:14px;color:#000;font-weight:bold;transform:scaleX(0.8836);">Process</span>
<span class="t" style="left:260.20px;top:326px;font-size:14px;line-height:14px;color:#000;font-weight:bold;transform:scaleX(0.9143);">Code</span>
<span class="t" style="left:318.80px;top:308px;font-size:14px;line-height:14px;color:#000;font-weight:bold;transform:scaleX(0.9303);">Appr</span>
<span class="t" style="left:319.80px;top:326px;font-size:14px;line-height:14px;color:#000;font-weight:bold;transform:scaleX(0.9368);">Stage</span>
<span class="t" style="left:372.20px;top:290px;font-size:14px;line-height:14px;color:#000;font-weight:bold;transform:scaleX(0.9742);">Validation</span>
<span class="t" style="left:372.20px;top:308px;font-size:14px;line-height:14px;color:#000;font-weight:bold;transform:scaleX(0.9097);">Rule</span>
<span class="t" style="left:372.20px;top:326px;font-size:14px;line-height:14px;color:#000;font-weight:bold;transform:scaleX(0.9343);">Code</span>
<span class="t" style="left:443.00px;top:308px;font-size:14px;line-height:14px;color:#000;font-weight:bold;transform:scaleX(0.8632);">Success</span>
<span class="t" style="left:458.50px;top:326px;font-size:14px;line-height:14px;color:#000;font-weight:bold;transform:scaleX(0.8565);">Y/N</span>
<span class="t" style="left:504.70px;top:290px;font-size:14px;line-height:14px;color:#000;transform:scaleX(0.9061);">Change</span>
<span class="t" style="left:504.70px;top:308px;font-size:14px;line-height:14px;color:#000;transform:scaleX(0.9250);">Reason</span>
<span class="t" style="left:504.70px;top:326px;font-size:14px;line-height:14px;color:#000;transform:scaleX(0.8824);">Code</span>
<span class="t" style="left:566.60px;top:290px;font-size:14px;line-height:14px;color:#000;transform:scaleX(0.9060);">Approving/</span>
<span class="t" style="left:567.20px;top:308px;font-size:14px;line-height:14px;color:#000;transform:scaleX(0.8800);">Overriding</span>
<span class="t" style="left:567.00px;top:326px;font-size:14px;line-height:14px;color:#000;transform:scaleX(0.9167);">User</span>
<span class="t" style="left:652.00px;top:308px;font-size:14px;line-height:14px;color:#000;transform:scaleX(0.9109);">Date/Time</span>
<span class="t" style="left:652.00px;top:326px;font-size:14px;line-height:14px;color:#000;transform:scaleX(0.9000);">of Change</span>
<div class="fo" style="left:41px;top:344px;width:73px;height:20px;"><div class="fi" style="width:69px;background:#d9dbf7"><span class="t" style="left:1.20px;top:1px;font-size:14px;line-height:14px;transform:scaleX(0.8929);">150000278</span></div></div>
<div class="fo" style="left:123px;top:344px;width:34px;height:20px;"><div class="fi" style="width:30px;background:#d9dbf7"><span class="t" style="left:0.20px;top:1px;font-size:14px;line-height:14px;transform:scaleX(0.9194);">2015</span></div></div>
<div class="fo" style="left:163px;top:344px;width:91px;height:20px;"><div class="fi" style="width:87px;background:#d9dbf7"><span class="t" style="left:0.20px;top:1px;font-size:14px;line-height:14px;transform:scaleX(0.9254);">DSPORT</span></div></div>
<div class="fo" style="left:260px;top:344px;width:54px;height:20px;"><div class="fi" style="width:50px;background:#d9dbf7"><span class="t" style="left:0.20px;top:1px;font-size:14px;line-height:14px;transform:scaleX(0.9250);">GRAD</span></div></div>
<div class="fo" style="left:319px;top:344px;width:45px;height:20px;"><div class="fi" style="width:41px;background:#d9dbf7"><span class="t" style="left:0.20px;top:1px;font-size:14px;line-height:14px;transform:scaleX(0.8846);">ST1</span></div></div>
<div class="fo" style="left:372px;top:344px;width:70px;height:20px;"><div class="fi" style="width:66px;background:#d9dbf7"><span class="t" style="left:0.20px;top:1px;font-size:14px;line-height:14px;transform:scaleX(1.0176);">A1</span></div></div>
<div class="fo" style="left:459px;top:344px;width:23px;height:20px;"><div class="fi" style="width:19px;background:#d9dbf7"><span class="t" style="left:0.20px;top:1px;font-size:14px;line-height:14px;transform:scaleX(0.9300);">Y</span></div></div>
<div class="fo" style="left:506px;top:344px;width:52px;height:20px;"><div class="fi" style="width:48px;background:#d9dbf7"></div></div>
<div class="fo" style="left:567px;top:344px;width:75px;height:20px;"><div class="fi" style="width:71px;background:#d9dbf7"><span class="t" style="left:0.20px;top:1px;font-size:14px;line-height:14px;transform:scaleX(0.9444);">MVDW</span></div></div>
<div class="fo" style="left:652px;top:344px;width:125px;height:20px;"><div class="fi" style="width:121px;background:#d9dbf7"><span class="t" style="left:1.20px;top:1px;font-size:14px;line-height:14px;transform:scaleX(0.8947);">14-JAN-2016 152253</span></div></div>
<div class="fo" style="left:41px;top:371px;width:73px;height:20px;"><div class="fi" style="width:69px;background:#fff"><span class="t" style="left:1.20px;top:1px;font-size:14px;line-height:14px;transform:scaleX(0.8929);">150000278</span></div></div>
<div class="fo" style="left:123px;top:371px;width:34px;height:20px;"><div class="fi" style="width:30px;background:#fff"><span class="t" style="left:0.20px;top:1px;font-size:14px;line-height:14px;transform:scaleX(0.9194);">2015</span></div></div>
<div class="fo" style="left:163px;top:371px;width:91px;height:20px;"><div class="fi" style="width:87px;background:#fff"><span class="t" style="left:0.20px;top:1px;font-size:14px;line-height:14px;transform:scaleX(0.9254);">DSPORT</span></div></div>
<div class="fo" style="left:260px;top:371px;width:54px;height:20px;"><div class="fi" style="width:50px;background:#fff"><span class="t" style="left:0.20px;top:1px;font-size:14px;line-height:14px;transform:scaleX(0.9250);">GRAD</span></div></div>
<div class="fo" style="left:319px;top:371px;width:45px;height:20px;"><div class="fi" style="width:41px;background:#fff"><span class="t" style="left:0.20px;top:1px;font-size:14px;line-height:14px;transform:scaleX(0.8846);">ST1</span></div></div>
<div class="fo" style="left:372px;top:371px;width:70px;height:20px;"><div class="fi" style="width:66px;background:#fff"><span class="t" style="left:0.20px;top:1px;font-size:14px;line-height:14px;transform:scaleX(1.0176);">A2</span></div></div>
<div class="fo" style="left:459px;top:371px;width:23px;height:20px;"><div class="fi" style="width:19px;background:#fff"><span class="t" style="left:0.20px;top:1px;font-size:14px;line-height:14px;transform:scaleX(0.9300);">Y</span></div></div>
<div class="fo" style="left:506px;top:371px;width:52px;height:20px;"><div class="fi" style="width:48px;background:#fff"></div></div>
<div class="fo" style="left:567px;top:371px;width:75px;height:20px;"><div class="fi" style="width:71px;background:#fff"><span class="t" style="left:0.20px;top:1px;font-size:14px;line-height:14px;transform:scaleX(0.9444);">MVDW</span></div></div>
<div class="fo" style="left:652px;top:371px;width:125px;height:20px;"><div class="fi" style="width:121px;background:#fff"><span class="t" style="left:1.20px;top:1px;font-size:14px;line-height:14px;transform:scaleX(0.8947);">14-JAN-2016 152253</span></div></div>
<div class="fo" style="left:41px;top:398px;width:73px;height:20px;"><div class="fi" style="width:69px;background:#fff"><span class="t" style="left:1.20px;top:1px;font-size:14px;line-height:14px;transform:scaleX(0.8929);">150000278</span></div></div>
<div class="fo" style="left:123px;top:398px;width:34px;height:20px;"><div class="fi" style="width:30px;background:#fff"><span class="t" style="left:0.20px;top:1px;font-size:14px;line-height:14px;transform:scaleX(0.9194);">2015</span></div></div>
<div class="fo" style="left:163px;top:398px;width:91px;height:20px;"><div class="fi" style="width:87px;background:#fff"><span class="t" style="left:0.20px;top:1px;font-size:14px;line-height:14px;transform:scaleX(0.9254);">DSPORT</span></div></div>
<div class="fo" style="left:260px;top:398px;width:54px;height:20px;"><div class="fi" style="width:50px;background:#fff"><span class="t" style="left:0.20px;top:1px;font-size:14px;line-height:14px;transform:scaleX(0.9250);">GRAD</span></div></div>
<div class="fo" style="left:319px;top:398px;width:45px;height:20px;"><div class="fi" style="width:41px;background:#fff"><span class="t" style="left:0.20px;top:1px;font-size:14px;line-height:14px;transform:scaleX(0.8846);">ST1</span></div></div>
<div class="fo" style="left:372px;top:398px;width:70px;height:20px;"><div class="fi" style="width:66px;background:#fff"><span class="t" style="left:0.20px;top:1px;font-size:14px;line-height:14px;transform:scaleX(1.0176);">B1</span></div></div>
<div class="fo" style="left:459px;top:398px;width:23px;height:20px;"><div class="fi" style="width:19px;background:#fff"><span class="t" style="left:0.20px;top:1px;font-size:14px;line-height:14px;transform:scaleX(0.9300);">Y</span></div></div>
<div class="fo" style="left:506px;top:398px;width:52px;height:20px;"><div class="fi" style="width:48px;background:#fff"></div></div>
<div class="fo" style="left:567px;top:398px;width:75px;height:20px;"><div class="fi" style="width:71px;background:#fff"><span class="t" style="left:0.20px;top:1px;font-size:14px;line-height:14px;transform:scaleX(0.9444);">MVDW</span></div></div>
<div class="fo" style="left:652px;top:398px;width:125px;height:20px;"><div class="fi" style="width:121px;background:#fff"><span class="t" style="left:1.20px;top:1px;font-size:14px;line-height:14px;transform:scaleX(0.8947);">14-JAN-2016 152253</span></div></div>
<div class="fo" style="left:41px;top:424px;width:73px;height:20px;"><div class="fi" style="width:69px;background:#fff"><span class="t" style="left:1.20px;top:1px;font-size:14px;line-height:14px;transform:scaleX(0.8929);">150000278</span></div></div>
<div class="fo" style="left:123px;top:424px;width:34px;height:20px;"><div class="fi" style="width:30px;background:#fff"><span class="t" style="left:0.20px;top:1px;font-size:14px;line-height:14px;transform:scaleX(0.9194);">2015</span></div></div>
<div class="fo" style="left:163px;top:424px;width:91px;height:20px;"><div class="fi" style="width:87px;background:#fff"><span class="t" style="left:0.20px;top:1px;font-size:14px;line-height:14px;transform:scaleX(0.9254);">DSPORT</span></div></div>
<div class="fo" style="left:260px;top:424px;width:54px;height:20px;"><div class="fi" style="width:50px;background:#fff"><span class="t" style="left:0.20px;top:1px;font-size:14px;line-height:14px;transform:scaleX(0.9250);">GRAD</span></div></div>
<div class="fo" style="left:319px;top:424px;width:45px;height:20px;"><div class="fi" style="width:41px;background:#fff"><span class="t" style="left:0.20px;top:1px;font-size:14px;line-height:14px;transform:scaleX(0.8846);">ST1</span></div></div>
<div class="fo" style="left:372px;top:424px;width:70px;height:20px;"><div class="fi" style="width:66px;background:#fff"><span class="t" style="left:0.20px;top:1px;font-size:14px;line-height:14px;transform:scaleX(0.9611);">C1</span></div></div>
<div class="fo" style="left:459px;top:424px;width:23px;height:20px;"><div class="fi" style="width:19px;background:#fff"><span class="t" style="left:0.20px;top:1px;font-size:14px;line-height:14px;transform:scaleX(0.9300);">Y</span></div></div>
<div class="fo" style="left:506px;top:424px;width:52px;height:20px;"><div class="fi" style="width:48px;background:#fff"></div></div>
<div class="fo" style="left:567px;top:424px;width:75px;height:20px;"><div class="fi" style="width:71px;background:#fff"><span class="t" style="left:0.20px;top:1px;font-size:14px;line-height:14px;transform:scaleX(0.9444);">MVDW</span></div></div>
<div class="fo" style="left:652px;top:424px;width:125px;height:20px;"><div class="fi" style="width:121px;background:#fff"><span class="t" style="left:1.20px;top:1px;font-size:14px;line-height:14px;transform:scaleX(0.8947);">14-JAN-2016 152253</span></div></div>
<div class="fo" style="left:41px;top:451px;width:73px;height:20px;"><div class="fi" style="width:69px;background:#fff"><span class="t" style="left:1.20px;top:1px;font-size:14px;line-height:14px;transform:scaleX(0.8929);">150000278</span></div></div>
<div class="fo" style="left:123px;top:451px;width:34px;height:20px;"><div class="fi" style="width:30px;background:#fff"><span class="t" style="left:0.20px;top:1px;font-size:14px;line-height:14px;transform:scaleX(0.9194);">2015</span></div></div>
<div class="fo" style="left:163px;top:451px;width:91px;height:20px;"><div class="fi" style="width:87px;background:#fff"><span class="t" style="left:0.20px;top:1px;font-size:14px;line-height:14px;transform:scaleX(0.9254);">DSPORT</span></div></div>
<div class="fo" style="left:260px;top:451px;width:54px;height:20px;"><div class="fi" style="width:50px;background:#fff"><span class="t" style="left:0.20px;top:1px;font-size:14px;line-height:14px;transform:scaleX(0.9250);">GRAD</span></div></div>
<div class="fo" style="left:319px;top:451px;width:45px;height:20px;"><div class="fi" style="width:41px;background:#fff"><span class="t" style="left:0.20px;top:1px;font-size:14px;line-height:14px;transform:scaleX(0.8846);">ST1</span></div></div>
<div class="fo" style="left:372px;top:451px;width:70px;height:20px;"><div class="fi" style="width:66px;background:#fff"><span class="t" style="left:0.20px;top:1px;font-size:14px;line-height:14px;transform:scaleX(0.9412);">F1</span></div></div>
<div class="fo" style="left:459px;top:451px;width:23px;height:20px;"><div class="fi" style="width:19px;background:#fff"><span class="t" style="left:0.20px;top:1px;font-size:14px;line-height:14px;transform:scaleX(0.9300);">Y</span></div></div>
<div class="fo" style="left:506px;top:451px;width:52px;height:20px;"><div class="fi" style="width:48px;background:#fff"></div></div>
<div class="fo" style="left:567px;top:451px;width:75px;height:20px;"><div class="fi" style="width:71px;background:#fff"><span class="t" style="left:0.20px;top:1px;font-size:14px;line-height:14px;transform:scaleX(0.9444);">MVDW</span></div></div>
<div class="fo" style="left:652px;top:451px;width:125px;height:20px;"><div class="fi" style="width:121px;background:#fff"><span class="t" style="left:1.20px;top:1px;font-size:14px;line-height:14px;transform:scaleX(0.8947);">14-JAN-2016 152253</span></div></div>
<div class="fo" style="left:41px;top:478px;width:73px;height:20px;"><div class="fi" style="width:69px;background:#fff"></div></div>
<div class="fo" style="left:123px;top:478px;width:34px;height:20px;"><div class="fi" style="width:30px;background:#fff"></div></div>
<div class="fo" style="left:163px;top:478px;width:91px;height:20px;"><div class="fi" style="width:87px;background:#fff"></div></div>
<div class="fo" style="left:260px;top:478px;width:54px;height:20px;"><div class="fi" style="width:50px;background:#fff"></div></div>
<div class="fo" style="left:319px;top:478px;width:45px;height:20px;"><div class="fi" style="width:41px;background:#fff"></div></div>
<div class="fo" style="left:372px;top:478px;width:70px;height:20px;"><div class="fi" style="width:66px;background:#fff"></div></div>
<div class="fo" style="left:459px;top:478px;width:23px;height:20px;"><div class="fi" style="width:19px;background:#fff"></div></div>
<div class="fo" style="left:506px;top:478px;width:52px;height:20px;"><div class="fi" style="width:48px;background:#fff"></div></div>
<div class="fo" style="left:567px;top:478px;width:75px;height:20px;"><div class="fi" style="width:71px;background:#fff"></div></div>
<div class="fo" style="left:652px;top:478px;width:125px;height:20px;"><div class="fi" style="width:121px;background:#fff"></div></div>
<div class="fo" style="left:41px;top:504px;width:73px;height:20px;"><div class="fi" style="width:69px;background:#fff"></div></div>
<div class="fo" style="left:123px;top:504px;width:34px;height:20px;"><div class="fi" style="width:30px;background:#fff"></div></div>
<div class="fo" style="left:163px;top:504px;width:91px;height:20px;"><div class="fi" style="width:87px;background:#fff"></div></div>
<div class="fo" style="left:260px;top:504px;width:54px;height:20px;"><div class="fi" style="width:50px;background:#fff"></div></div>
<div class="fo" style="left:319px;top:504px;width:45px;height:20px;"><div class="fi" style="width:41px;background:#fff"></div></div>
<div class="fo" style="left:372px;top:504px;width:70px;height:20px;"><div class="fi" style="width:66px;background:#fff"></div></div>
<div class="fo" style="left:459px;top:504px;width:23px;height:20px;"><div class="fi" style="width:19px;background:#fff"></div></div>
<div class="fo" style="left:506px;top:504px;width:52px;height:20px;"><div class="fi" style="width:48px;background:#fff"></div></div>
<div class="fo" style="left:567px;top:504px;width:75px;height:20px;"><div class="fi" style="width:71px;background:#fff"></div></div>
<div class="fo" style="left:652px;top:504px;width:125px;height:20px;"><div class="fi" style="width:121px;background:#fff"></div></div>
<div class="fo" style="left:41px;top:531px;width:73px;height:20px;"><div class="fi" style="width:69px;background:#fff"></div></div>
<div class="fo" style="left:123px;top:531px;width:34px;height:20px;"><div class="fi" style="width:30px;background:#fff"></div></div>
<div class="fo" style="left:163px;top:531px;width:91px;height:20px;"><div class="fi" style="width:87px;background:#fff"></div></div>
<div class="fo" style="left:260px;top:531px;width:54px;height:20px;"><div class="fi" style="width:50px;background:#fff"></div></div>
<div class="fo" style="left:319px;top:531px;width:45px;height:20px;"><div class="fi" style="width:41px;background:#fff"></div></div>
<div class="fo" style="left:372px;top:531px;width:70px;height:20px;"><div class="fi" style="width:66px;background:#fff"></div></div>
<div class="fo" style="left:459px;top:531px;width:23px;height:20px;"><div class="fi" style="width:19px;background:#fff"></div></div>
<div class="fo" style="left:506px;top:531px;width:52px;height:20px;"><div class="fi" style="width:48px;background:#fff"></div></div>
<div class="fo" style="left:567px;top:531px;width:75px;height:20px;"><div class="fi" style="width:71px;background:#fff"></div></div>
<div class="fo" style="left:652px;top:531px;width:125px;height:20px;"><div class="fi" style="width:121px;background:#fff"></div></div>
<div style="left:15px;top:744px;width:1012px;height:36px;background:#f2f1e2;border-top:1px solid #d3d6a8;border-left:1px solid #d3d6a8;border-right:1px solid #000;border-bottom:1px solid #000;border-radius:7px;"></div>
<div style="left:22px;top:763px;width:1000px;height:1px;background:#d3d6a8"></div>
<span class="t" style="left:22.00px;top:767px;font-size:12px;line-height:12px;color:#000;transform:scaleX(1.0210);">Record: 1/5</span>
<div style="left:148px;top:766px;width:1px;height:13px;background:#000"></div>
<div style="left:176px;top:766px;width:1px;height:13px;background:#000"></div>
<div style="left:257px;top:766px;width:1px;height:13px;background:#000"></div>
<div style="left:345px;top:766px;width:1px;height:13px;background:#000"></div>
<div style="left:400px;top:766px;width:1px;height:13px;background:#000"></div>
<div style="left:239px;top:776px;width:1px;height:1px;background:#333"></div>
<div style="left:242px;top:776px;width:1px;height:1px;background:#333"></div>
<div style="left:245px;top:776px;width:1px;height:1px;background:#333"></div>
<div style="left:1013px;top:746px;width:1px;height:17px;background:#000"></div>
<div style="left:1015px;top:746px;width:1px;height:17px;background:#d3d6a8"></div>
</body></html>
